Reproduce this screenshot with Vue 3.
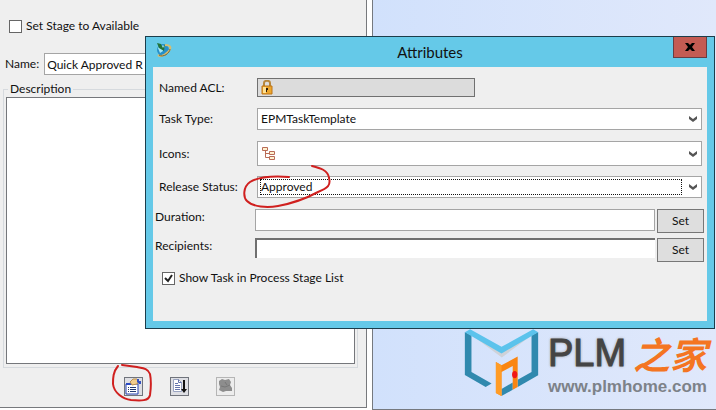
<script setup>
import { ref } from 'vue'

const stageAvailable = ref(false)
const name = ref('Quick Approved R')
const description = ref('')
const taskType = ref('EPMTaskTemplate')
const icon = ref('')
const releaseStatus = ref('Approved')
const duration = ref('')
const recipients = ref('')
const showTask = ref(true)
</script>

<template>
  <div class="screen">
    <section class="stage">
      <label class="check">
        <input v-model="stageAvailable" type="checkbox" />
        Set Stage to Available
      </label>

      <div class="name-row">
        <label for="name">Name:</label>
        <input id="name" v-model="name" class="text-field" type="text" />
      </div>

      <fieldset class="description">
        <legend><label for="description">Description</label></legend>
        <textarea id="description" v-model="description"></textarea>
      </fieldset>

      <div class="toolbar">
        <div class="marked">
          <button class="tool" type="button" aria-label="Task attributes">
            <svg viewBox="0 0 17 17">
              <path d="M1 6h12v10H1z" fill="#fff" stroke="#2540b0" />
              <path d="M1 5h7v2H1z" fill="#2848c4" />
              <path d="M3 9.5h1M3 11.5h1M3 13.5h1M5 9.5h6M5 11.5h6M5 13.5h6" stroke="#223a70" />
              <path d="M5 4l3-3h4l2 2-2 3-5 1z" fill="#f2cd8c" stroke="#b98f50" />
              <path d="M12 1h2v2h2v3h-2l-2-2z" fill="#3451c0" />
            </svg>
          </button>
          <svg class="mark" viewBox="0 0 40 38">
            <path d="M6 2C1 8 1 14 1 20c1 9 10 15 18 16 10 1 18 1 19-5 1-7 1-16 0-21-2-6-8-6-13-7L10 1" />
          </svg>
        </div>
        <button class="tool" type="button" aria-label="Task order">
          <svg viewBox="0 0 17 17">
            <path d="M2.5 1.5h5l3 3v9h-8z" fill="#fff" stroke="#9aa4c0" />
            <path d="M7.5 1.5v3h3M4 5.5h3M4 7.5h5M4 9.5h5M4 11.5h5" fill="none" stroke="#6474ac" />
            <path d="M12 2h2v9h2l-3 4-3-4h2z" fill="#111" />
          </svg>
        </button>
        <button class="tool" type="button" aria-label="Assignments" disabled>
          <svg viewBox="0 0 17 17">
            <path d="M2 3l3-2 3 1 4-1 2 3-1 3 2 3v3H9l-3 1-4-2 1-3-1-3z" fill="#8d8d8d" />
            <path d="M4 8l4 1 5-2M8 4l2 3" fill="none" stroke="#777" />
          </svg>
        </button>
      </div>
    </section>

    <section class="canvas">
      <div class="brand">
        <svg class="brand-logo" viewBox="74 52 226 206">
          <path d="M96 70l92 52 90-50-90 66z" fill="#cfd2d8" />
          <path d="M76 61l20 11v110l61 35-18 11-63-37z" fill="#3089ae" />
          <path d="M298 61l-20 11v110l-42 24v22l62-36zM187 234l34-20v22l-34 19z" fill="#3089ae" />
          <path d="M76 62l16-9 95 53 96-53 15 9-111 64z" fill="#5cc3ec" />
          <path d="M170 152l17 10 49-27v93l-15 8v-72l-34 18v73l-17-9z" fill="#fa8511" />
          <path d="M170 152l17 10v93l-17-9z" fill="#ff9c26" />
          <ellipse cx="227" cy="190" rx="8" ry="11" fill="#f01818" />
        </svg>
        <div>
          <p class="brand-name">PLM<span>之家</span></p>
          <p class="brand-site">www.plmhome.com</p>
        </div>
      </div>
    </section>

    <div class="dialog" role="dialog" aria-labelledby="dialog-title">
      <header class="title-bar">
        <svg class="app-icon" viewBox="0 0 17 17">
          <circle cx="8" cy="8" r="6" fill="#258fca" />
          <path d="M3 6c2-3 5-3 7-2L8 9l-3 2z" fill="#a7e8f4" />
          <path d="M2 1l4 1 2 4 2-4-1 7-5-3z" fill="#22733a" />
          <path d="M10 3c6 0 7 3 3 7-4 4-8 5-10 3" fill="none" stroke="#d5bd72" stroke-width="2" />
          <path d="M4 13c4 3 11-2 11-6" fill="none" stroke="#756b3d" />
        </svg>
        <h1 id="dialog-title">Attributes</h1>
        <button class="close" type="button" aria-label="Close">
          <svg viewBox="0 0 10 8"><path d="M0 0h3l2 2 2-2h3L7 4l3 4H7L5 6 3 8H0l3-4z" /></svg>
        </button>
      </header>

      <form class="attributes" @submit.prevent>
        <div class="row acl-row">
          <label for="acl">Named ACL:</label>
          <button id="acl" class="acl" type="button">
            <svg viewBox="0 0 12 15">
              <path d="M3 7V3c0-3 6-3 6 0v4" fill="none" stroke="#b7873c" stroke-width="2" />
              <path d="M1 6h10v8H1z" fill="#eda62c" stroke="#bd7416" />
              <path d="M2 7h3v6H2z" fill="#ffe294" />
              <path d="M5 8h2v2H6v2H5z" fill="#2d1b08" />
            </svg>
          </button>
        </div>

        <div class="row">
          <label for="task-type">Task Type:</label>
          <div class="combo">
            <select id="task-type" v-model="taskType">
              <option>EPMTaskTemplate</option>
            </select>
            <svg class="arrow" viewBox="0 0 8 6"><path d="M0 0l4 3 4-3v3L4 6 0 3z" /></svg>
          </div>
        </div>

        <div class="row icon-row">
          <label for="icons">Icons:</label>
          <div class="combo">
            <select id="icons" v-model="icon">
              <option value=""></option>
            </select>
            <svg class="tree" viewBox="0 0 14 13">
              <path d="M3.5 4v6.5H7M3.5 6.5H7" />
              <path d="M.5.5h5v3h-5zM7.5 4.5h5v3h-5zM7.5 9.5h5v3h-5z" fill="#fff1cf" />
            </svg>
            <svg class="arrow" viewBox="0 0 8 6"><path d="M0 0l4 3 4-3v3L4 6 0 3z" /></svg>
          </div>
        </div>

        <div class="row">
          <label for="release-status">Release Status:</label>
          <div class="combo focused">
            <select id="release-status" v-model="releaseStatus">
              <option>Approved</option>
            </select>
            <svg class="arrow" viewBox="0 0 8 6"><path d="M0 0l4 3 4-3v3L4 6 0 3z" /></svg>
            <svg class="mark" viewBox="0 0 88 44">
              <path d="M46 12C32 11 15 12 7 17c-7 5-7 15-3 19 6 6 20 7 31 5 16-3 29-8 40-14 10-4 13-7 11-14C85 5 77 3 69 1" />
            </svg>
          </div>
        </div>

        <div class="set-row">
          <label for="duration">Duration:</label>
          <input id="duration" v-model="duration" class="text-field" type="text" />
          <button class="set" type="button">Set</button>
        </div>

        <div class="set-row">
          <label for="recipients">Recipients:</label>
          <input id="recipients" v-model="recipients" class="text-field sunken" type="text" />
          <button class="set" type="button">Set</button>
        </div>

        <label class="check">
          <input v-model="showTask" type="checkbox" />
          Show Task in Process Stage List
        </label>
      </form>
    </div>
  </div>
</template>

<style>
body {
  margin: 0;
  background: #fff;
}
</style>

<style scoped>
* {
  box-sizing: border-box;
}

.screen {
  position: relative;
  display: grid;
  grid-template-columns: 16fr 15fr;
  gap: 5px;
  min-height: 100vh;
  color: #111;
  font-family: Lato, "Open Sans", sans-serif;
  font-size: 12px;
  line-height: 16px;
}

button,
input,
select,
textarea {
  margin: 0;
  color: inherit;
  font: inherit;
  border-radius: 0;
}

svg {
  display: block;
}

.stage {
  display: flex;
  flex-direction: column;
  margin-bottom: 2px;
  padding: 18px 8px 10px 3px;
  background: #efefef;
  border-right: 1px solid #77797d;
  border-bottom: 1px solid #77797d;
}

.check {
  display: flex;
  align-items: center;
  gap: 4px;
}

.check input {
  appearance: none;
  width: 13px;
  height: 13px;
  background: #fff;
  border: 1px solid #666;
}

.check input:checked {
  background: #fff url("data:image/svg+xml,%3Csvg xmlns='http://www.w3.org/2000/svg' viewBox='0 0 11 11'%3E%3Cpath d='M2 5l3 3 4-6' fill='none' stroke='%23222' stroke-width='2'/%3E%3C/svg%3E");
}

.stage .check {
  padding-left: 6px;
}

.name-row {
  display: flex;
  align-items: center;
  gap: 5px;
  margin-top: 19px;
  padding-left: 2px;
}

.text-field {
  flex: 1;
  min-width: 0;
  height: 22px;
  padding: 0 2px;
  background: #fff;
  border: 1px solid #a5a5a5;
}

.description {
  display: flex;
  flex: 1;
  min-width: 0;
  margin: 6px 0 0;
  padding: 0 2px 3px;
  border: 1px solid #d6dade;
}

.description legend {
  margin-left: 2px;
  padding: 0 2px;
}

.description textarea {
  flex: 1;
  min-width: 0;
  min-height: 120px;
  padding: 4px;
  resize: none;
  background: #fff;
  border: 1px solid #75777b;
}

.toolbar {
  display: flex;
  gap: 27px;
  margin-top: 9px;
  padding: 0 0 1px 121px;
}

.tool {
  display: grid;
  place-items: center;
  width: 19px;
  height: 19px;
  padding: 0;
  background: #dedfe4;
  border: 1px solid #70747c;
}

.tool:disabled {
  background: #ededed;
  border-color: #b5b5b5;
}

.tool svg {
  width: 17px;
  height: 17px;
}

.marked {
  position: relative;
}

.mark {
  position: absolute;
  z-index: 1;
  fill: none;
  stroke: #d0201f;
  stroke-width: 2;
  stroke-linecap: round;
  pointer-events: none;
}

.marked .mark {
  top: -13px;
  left: -12px;
  width: 40px;
  height: 38px;
}

.canvas {
  display: flex;
  align-items: flex-end;
  justify-content: flex-end;
  padding: 0 9px 12px;
  background: linear-gradient(90deg, #d1e1fc, #e0e8fb);
  border-left: 1px solid #75797f;
  border-bottom: 1px solid #75797f;
}

.brand {
  display: flex;
  gap: 9px;
}

.brand p {
  margin: 0;
}

.brand-logo {
  width: 75px;
  height: 68px;
}

.brand-name {
  display: flex;
  align-items: center;
  justify-content: space-between;
  height: 48px;
  color: #444;
  font-family: "Liberation Sans", Arial, sans-serif;
  font-size: 38px;
  line-height: 48px;
  -webkit-text-stroke: 1px #444;
  text-shadow: 0 0 3px #aaa, 0 0 3px #aaa;
}

.brand-name span {
  color: #f47522;
  font-family: "Noto Sans CJK SC", sans-serif;
  font-size: 37px;
  font-style: italic;
  font-weight: 700;
  -webkit-text-stroke: 0;
  text-shadow: none;
}

.brand-site {
  color: #7d8289;
  font-family: "Liberation Sans", Arial, sans-serif;
  font-size: 17px;
  font-weight: 700;
  line-height: 20px;
}

.dialog {
  position: absolute;
  top: 36px;
  right: 1px;
  left: 145px;
  padding: 0 7px 7px;
  background: #65c9e8;
  border: 1px solid #1c3d4b;
}

.title-bar {
  display: grid;
  grid-template-columns: 34px 1fr 34px;
  align-items: start;
  height: 30px;
}

.app-icon {
  width: 17px;
  height: 17px;
  margin: 5px 0 0 2px;
}

.title-bar h1 {
  margin: 5px 0 0;
  font-size: 15px;
  font-weight: 400;
  line-height: 20px;
  text-align: center;
}

.close {
  display: grid;
  place-items: center;
  height: 21px;
  padding: 0;
  background: #c45b53;
  border: 1px solid #693d43;
  border-top: 0;
}

.close svg {
  width: 10px;
  height: 8px;
}

.attributes {
  display: flex;
  flex-direction: column;
  padding: 11px 3px 35px 2px;
  background: #efefef;
}

.row {
  display: grid;
  grid-template-columns: 98px 1fr;
  align-items: center;
  margin-bottom: 11px;
  padding: 0 2px 0 4px;
}

.icon-row {
  margin-bottom: 10px;
}

.acl {
  width: 49%;
  height: 19px;
  padding: 0 3px;
  background: #dcdcdc;
  border: 1px solid #707070;
}

.acl svg {
  width: 12px;
  height: 15px;
}

.combo {
  position: relative;
  display: grid;
  align-items: center;
}

.combo > select,
.combo > .arrow,
.combo > .tree {
  grid-area: 1 / 1;
}

.combo select {
  appearance: none;
  width: 100%;
  height: 22px;
  padding: 0 20px 0 3px;
  background: #fff;
  border: 1px solid #a5a5a5;
  outline: 0;
}

.icon-row select {
  height: 25px;
}

.arrow {
  justify-self: end;
  width: 8px;
  height: 6px;
  margin-right: 5px;
  fill: #555;
  pointer-events: none;
}

.tree {
  width: 14px;
  height: 13px;
  margin-left: 5px;
  stroke: #b96c57;
  fill: none;
  pointer-events: none;
}

.focused::after {
  content: "";
  grid-area: 1 / 1;
  align-self: stretch;
  margin: 3px 20px 3px 3px;
  border: 1px dotted #111;
  pointer-events: none;
}

.focused .mark {
  top: -11px;
  left: -14px;
  width: 88px;
  height: 44px;
}

.set-row {
  display: grid;
  grid-template-columns: 100px 1fr 49px;
  align-items: start;
  margin-bottom: 5px;
}

.set-row .text-field {
  width: 100%;
}

.set-row .set {
  margin-left: 2px;
}

.set-row .sunken {
  height: 20px;
  border: 0;
  border-top: 2px solid #707070;
  border-left: 2px solid #707070;
}

.set {
  height: 24px;
  padding: 0;
  background: #dedede;
  border: 1px solid #777;
}

.attributes > .check {
  padding: 3px 0 0 7px;
}
</style>
